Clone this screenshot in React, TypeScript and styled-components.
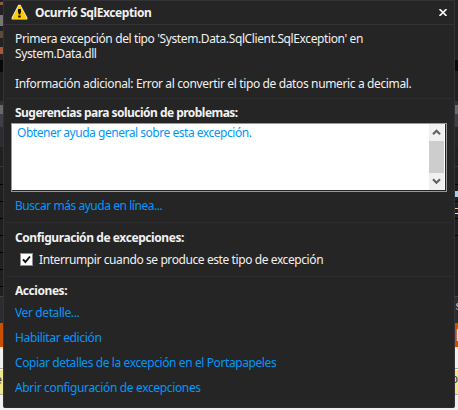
import React from "react";
import styled, { createGlobalStyle } from "styled-components";

const GlobalStyle = createGlobalStyle`
  * { box-sizing: border-box; }
  body {
    margin: 0;
    overflow: hidden;
    background: #f0f0f0;
    font: 12px/15px "Noto Sans", "Open Sans", sans-serif;
    color: #f1f1f1;
  }
`;

const Screen = styled.div`
  display: grid;
  grid-template-columns: 3px 452px 3px;
  width: 458px;
  height: 410px;
  overflow: hidden;
`;

const Edge = styled.div`
  display: flex;
  flex-direction: column;
  overflow: hidden;
`;

const Band = styled.div<{ $h: number; $color: string }>`
  flex: none;
  height: ${(p) => p.$h}px;
  background: ${(p) => p.$color};
  overflow: hidden;
`;

const Glyph = styled.span<{ $top: number; $color: string; $shift: number }>`
  display: block;
  margin: ${(p) => p.$top}px 0 0 ${(p) => p.$shift}px;
  font: 12px/14px "Liberation Mono", monospace;
  color: ${(p) => p.$color};
`;

const Dialog = styled.section`
  height: 408px;
  background: #252526;
  border: 1px solid #333337;
  border-bottom-color: #2b2b2d;
  border-radius: 0 0 2px 2px;
`;

const TitleBar = styled.header`
  display: flex;
  align-items: center;
  height: 24px;
  padding: 0 7px 0 7px;
  border-bottom: 1px solid #333337;
`;

const Title = styled.div`
  flex: 1;
  margin-left: 7px;
`;

const CloseButton = styled.button`
  display: flex;
  padding: 0;
  border: 0;
  background: none;
`;

const Section = styled.section<{ $h: number; $pad: number }>`
  height: ${(p) => p.$h}px;
  margin: 0 2px;
  padding: ${(p) => p.$pad}px 9px 0;
  border-bottom: 1px solid #2d2d30;
`;

const Line = styled.div<{ $spacing: number }>`
  height: 15px;
  white-space: nowrap;
  letter-spacing: ${(p) => p.$spacing}px;
`;

const Message = styled.p<{ $spacing: number }>`
  margin: 0 0 15px;
  white-space: nowrap;
  letter-spacing: ${(p) => p.$spacing}px;
`;

const Heading = styled(Line)`
  font-weight: 700;
`;

const Link = styled.a<{ $spacing: number; $gap?: number }>`
  display: block;
  height: 15px;
  margin-top: ${(p) => p.$gap ?? 0}px;
  white-space: nowrap;
  color: #0097fb;
  letter-spacing: ${(p) => p.$spacing}px;
`;

const ListBox = styled.div`
  display: flex;
  width: 436px;
  height: 69px;
  margin: 3px 0 6px -4px;
  border: 1px solid #999;
  background: #fff;
  box-shadow: inset -1px -1px #252526;
`;

const ListContent = styled.div`
  flex: 1;
  padding: 1px 0 0 5px;
`;

const ScrollBar = styled.div`
  display: flex;
  flex-direction: column;
  width: 15px;
  height: 66px;
  margin-right: 2px;
  background: #f0f0f0;
`;

const ScrollArrow = styled.div`
  display: flex;
  align-items: center;
  justify-content: center;
  height: 17px;
`;

const ScrollThumb = styled.div`
  height: 32px;
  background: #cdcdcd;
`;

const CheckRow = styled.label`
  display: flex;
  align-items: center;
  gap: 6px;
  margin: 7px 0 0 5px;
`;

const CheckBox = styled.span`
  display: flex;
  width: 13px;
  height: 13px;
  border: 1px solid #8d8d8d;
  background: #fff;
`;

const Actions = styled.section`
  padding: 6px 11px 0;
`;

type Stripe = [number, string];

const leftBands: Stripe[] = [
  [12, "#202021"], [4, "#303033"], [9, "#68686a"],
  [13, "#3e3e45"], [20, "#2d2d31"], [19, "#202021"], [1, "#39393b"], [17, "#202021"],
  [1, "#000"], [16, "#202021"], [1, "#000"], [16, "#202021"], [1, "#000"],
  [16, "#202021"], [1, "#000"], [16, "#202021"], [1, "#000"], [16, "#202021"],
  [1, "#000"], [16, "#202021"], [1, "#000"], [9, "#202021"], [1, "#434346"],
  [26, "#2d2d30"], [24, "#ca5100"],
  [2, "#f8ddd0"], [19, "#f0f0f0"], [1, "#aaa"], [1, "#fff"],
];

const rightBands: Stripe[] = [
  [60, "#222223"], [11, "#080808"], [30, "#202021"], [4, "#303033"], [9, "#68686a"],
  [13, "#3e3e45"], [20, "#252526"], [19, "#202021"], [1, "#39393b"], [17, "#202021"],
  [1, "#000"], [6, "#202021"], [6, "#a9c8f0"], [4, "#202021"], [1, "#000"],
  [6, "#202021"], [1, "#e0d0b0"], [4, "#202021"], [1, "#e0e0e0"], [4, "#202021"],
  [1, "#000"], [16, "#202021"], [1, "#000"], [60, "#202021"], [1, "#434346"],
];

const bands = (list: Stripe[]) =>
  list.map(([h, color], i) => <Band key={i} $h={h} $color={color} />);

const WarningIcon = () => (
  <svg width="17" height="17" viewBox="0 0 17 17">
    <path d="M7.3 .8h2.2L16.3 13.5v2H.7v-2z" fill="#f4f1e4" />
    <path d="M7.8 1.5h1.4L15.5 13.8v1.1h-14v-1.1z" fill="#fc0" />
    <path d="M7 5h3v3L9.2 10.5H7.8L7 8zM7.2 11.5h2.5v2H7.2z" fill="#111" />
  </svg>
);

const Chevron = ({ down }: { down?: boolean }) => (
  <svg width="9" height="7" viewBox="0 0 9 7">
    <path
      d={down ? "M1 1.2 4.5 4.7 8 1.2" : "M1 5.3 4.5 1.8 8 5.3"}
      fill="none"
      stroke="#606060"
      strokeWidth="2.1"
    />
  </svg>
);

export default function App() {
  return (
    <>
      <GlobalStyle />
      <Screen>
        <Edge>
          <Band $h={2} $color="#222223" />
          <Band $h={3} $color="#8a5a4a" />
          <Band $h={10} $color="#222223" />
          <Band $h={11} $color="#77777a" />
          <Band $h={5} $color="#222223" />
          <Band $h={7} $color="#5c4a40" />
          <Band $h={9} $color="#222223" />
          <Band $h={7} $color="#a5583c" />
          <Band $h={6} $color="#222223" />
          <Band $h={12} $color="#080808" />
          <Band $h={17} $color="#202021" />
          {bands(leftBands)}
          <Band $h={24} $color="#f0e68c">
            <Glyph $top={4} $shift={-5} $color="#20343c">e</Glyph>
          </Band>
          <Band $h={1} $color="#aaa" />
        </Edge>
        <Dialog>
          <TitleBar>
            <WarningIcon />
            <Title><Heading $spacing={-0.41}>Ocurrió SqlException</Heading></Title>
            <CloseButton aria-label="Cerrar">
              <svg width="8" height="7" viewBox="0 0 8 7">
                <path d="M.5 0 7.5 7M7.5 0 .5 7" stroke="#f1f1f1" strokeWidth="1.7" />
              </svg>
            </CloseButton>
          </TitleBar>
          <Section $h={74} $pad={6}>
            <Message $spacing={-0.385}>
              Primera excepción del tipo 'System.Data.SqlClient.SqlException' en<br />
              System.Data.dll
            </Message>
            <Message $spacing={-0.367}>Información adicional: Error al convertir el tipo de datos numeric a decimal.</Message>
          </Section>
          <Section $h={124} $pad={6}>
            <Heading $spacing={-0.53}>Sugerencias para solución de problemas:</Heading>
            <ListBox>
              <ListContent>
                <Link $spacing={-0.47}>Obtener ayuda general sobre esta excepción.</Link>
              </ListContent>
              <ScrollBar>
                <ScrollArrow><Chevron /></ScrollArrow>
                <ScrollThumb />
                <ScrollArrow><Chevron down /></ScrollArrow>
              </ScrollBar>
            </ListBox>
            <Link $spacing={-0.45}>Buscar más ayuda en línea...</Link>
          </Section>
          <Section $h={54} $pad={7}>
            <Heading $spacing={-0.42}>Configuración de excepciones:</Heading>
            <CheckRow>
              <CheckBox>
                <svg width="11" height="11" viewBox="0 0 11 11">
                  <path d="M2 5.3 4.4 8 9 2.5" fill="none" stroke="#111" strokeWidth="1.9" />
                </svg>
              </CheckBox>
              <Line $spacing={-0.41}>Interrumpir cuando se produce este tipo de excepción</Line>
            </CheckRow>
          </Section>
          <Actions>
            <Heading $spacing={-0.45}>Acciones:</Heading>
            <Link $spacing={-0.38} $gap={7}>Ver detalle...</Link>
            <Link $spacing={-0.33} $gap={10}>Habilitar edición</Link>
            <Link $spacing={-0.4} $gap={10}>Copiar detalles de la excepción en el Portapapeles</Link>
            <Link $spacing={-0.35} $gap={10}>Abrir configuración de excepciones</Link>
          </Actions>
        </Dialog>
        <Edge>
          {bands(rightBands)}
          <Band $h={26} $color="#2d2d30"><Glyph $top={3} $shift={0} $color="#d0d0d0">s</Glyph></Band>
          <Band $h={24} $color="#ca5100"><Glyph $top={5} $shift={-1} $color="#fff">|</Glyph></Band>
          <Band $h={2} $color="#f8ddd0" />
          <Band $h={19} $color="#f0f0f0" />
          <Band $h={1} $color="#aaa" />
          <Band $h={1} $color="#fff" />
          <Band $h={24} $color="#f0e68c"><Glyph $top={3} $shift={-4} $color="#20343c">o</Glyph></Band>
          <Band $h={1} $color="#aaa" />
        </Edge>
      </Screen>
    </>
  );
}
